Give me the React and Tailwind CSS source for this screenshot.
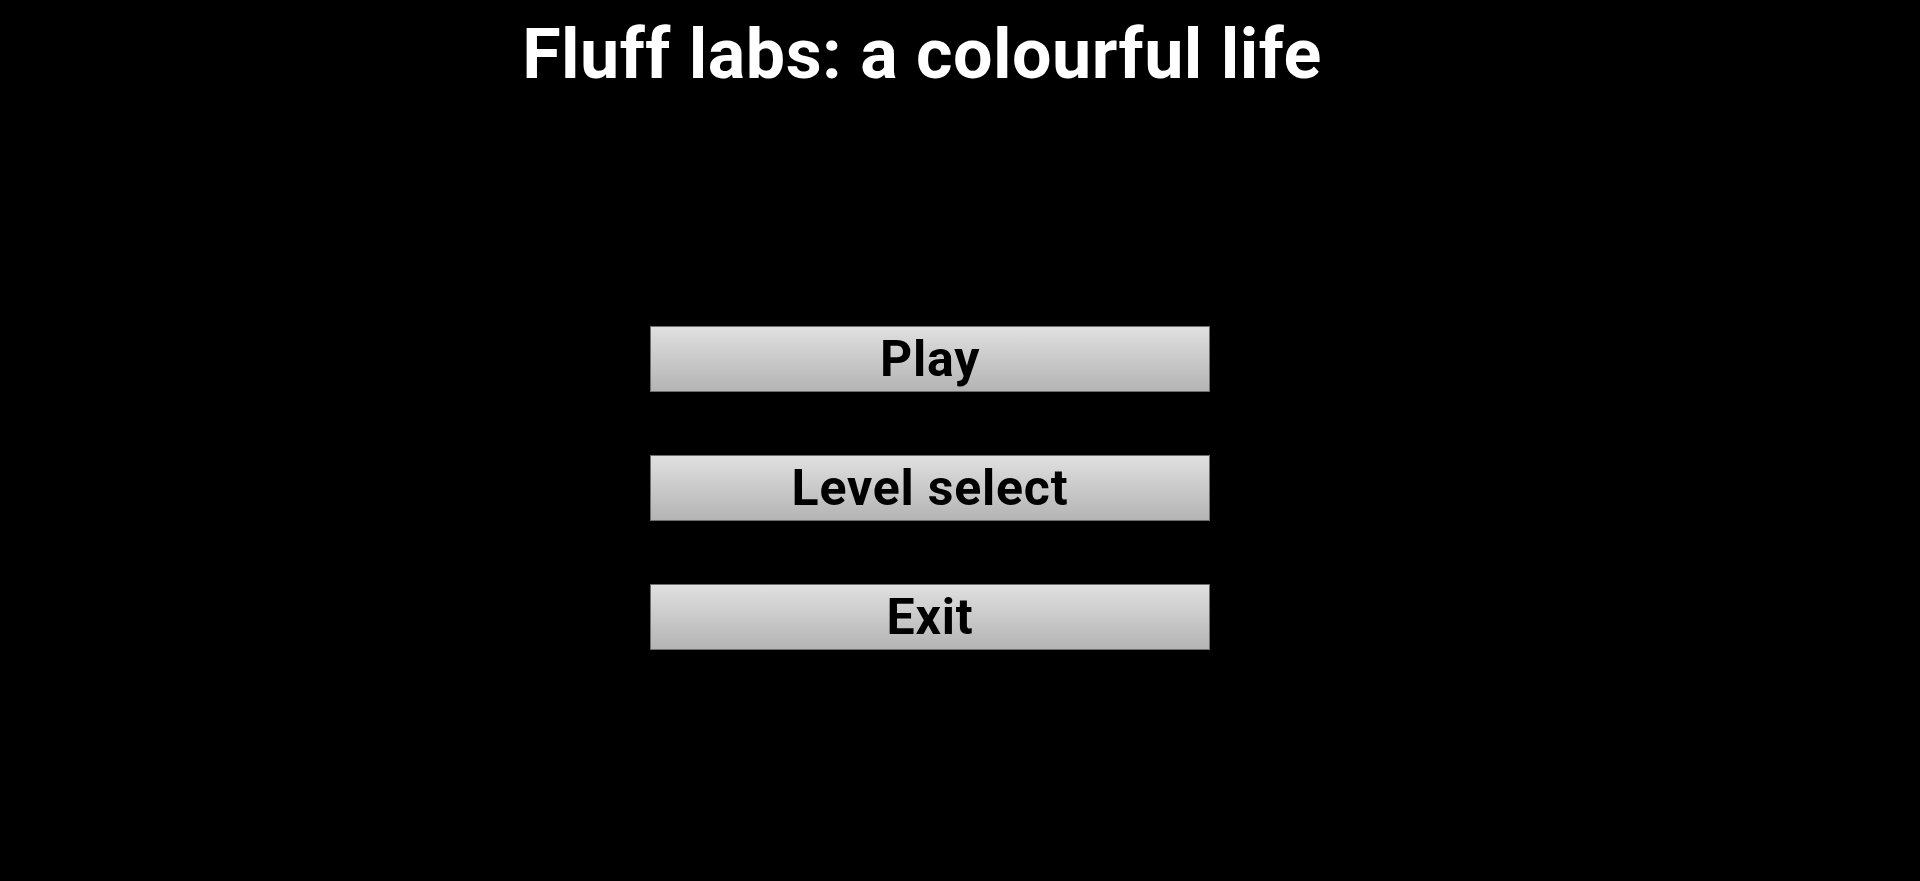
export default function App() {
  const buttons = ["Play", "Level select", "Exit"];
  return (
    <div
      className="w-[1920px] h-[881px] bg-black overflow-hidden"
      style={{ fontFamily: "Roboto, 'Liberation Sans', sans-serif" }}
    >
      <div className="w-[1860px] flex flex-col items-center">
        <h1 className="mt-[14px] pr-[16px] text-white font-bold text-[70px] leading-[80px] tracking-[0.5px]">
          Fluff labs: a colourful life
        </h1>
        <div className="mt-[232px] flex flex-col gap-[63px]">
          {buttons.map((b) => (
            <button
              key={b}
              className="w-[560px] h-[66px] border border-[#6e6e6e] bg-gradient-to-b from-[#e0e0e0] to-[#b4b4b4] text-black font-bold text-[50px] leading-none tracking-[0.8px] flex items-center justify-center"
            >
              {b}
            </button>
          ))}
        </div>
      </div>
    </div>
  );
}
